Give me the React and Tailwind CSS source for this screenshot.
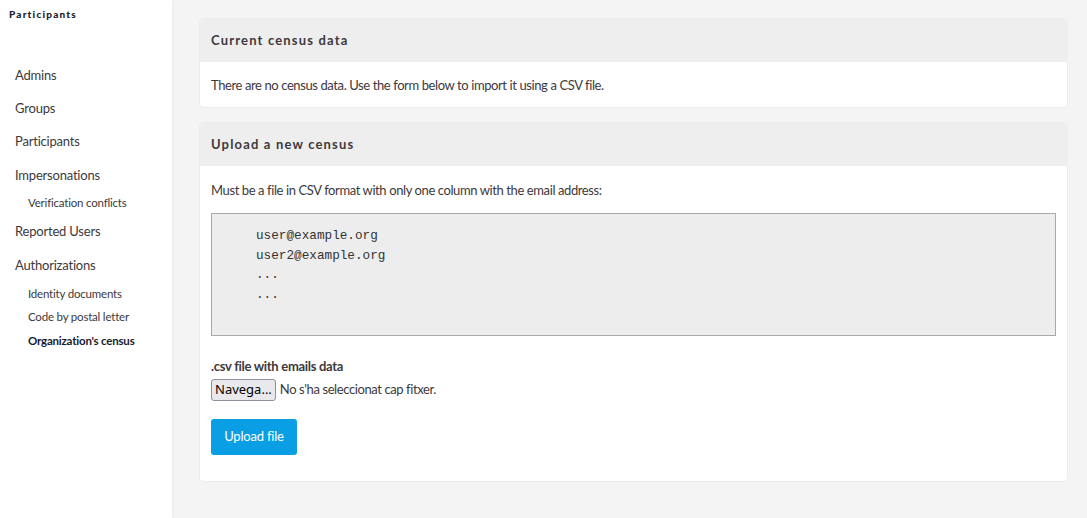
export default function App() {
  const font = { fontFamily: "Lato, 'Noto Sans', sans-serif" };
  return (
    <div className="flex min-h-[518px] w-[1087px] bg-[#f4f4f4] text-[#3d393c]" style={font}>
      <aside className="w-[172px] shrink-0 bg-white shadow-[1px_0_3px_rgba(0,0,0,0.04)]">
        <div className="pl-[9px] pt-[7px] text-[10px] font-black tracking-[0.12em] text-[#1a1a2e]">Participants</div>
        <nav className="mt-[41px] flex flex-col pl-[15px] text-[13px] tracking-[-0.2px]">
          <a className="h-[33px] leading-[24px]">Admins</a>
          <a className="h-[33px] leading-[24px]">Groups</a>
          <a className="h-[34px] leading-[24px]">Participants</a>
          <a className="h-[24px] leading-[24px]">Impersonations</a>
          <a className="h-[32px] pl-[13px] text-[11.5px] leading-[32px]">Verification conflicts</a>
          <a className="h-[34px] leading-[24px]">Reported Users</a>
          <a className="h-[31px] leading-[24px]">Authorizations</a>
          <a className="h-[23px] pl-[13px] text-[11.5px] leading-[20px]">Identity documents</a>
          <a className="h-[24px] pl-[13px] text-[11.5px] leading-[20px]">Code by postal letter</a>
          <a className="h-[24px] pl-[13px] text-[11.5px] font-bold leading-[20px] text-[#1a1a2e]">Organization's census</a>
        </nav>
      </aside>
      <main className="flex flex-1 flex-col gap-[14px] pl-[27px] pr-[19px] pt-[18px] pb-[37px]">
        <section className="overflow-hidden rounded-[4px] border border-[#ececec] bg-white">
          <h2 className="flex h-[43px] items-center bg-[#eeeeee] px-[11px] text-[13px] font-bold tracking-[0.09em] text-[#3d393c]">Current census data</h2>
          <p className="px-[11px] pt-[15px] pb-[14px] text-[13px] leading-[16px] tracking-[-0.4px]">There are no census data. Use the form below to import it using a CSV file.</p>
        </section>
        <section className="overflow-hidden rounded-[4px] border border-[#ececec] bg-white">
          <h2 className="flex h-[43px] items-center bg-[#eeeeee] px-[11px] text-[13px] font-bold tracking-[0.09em] text-[#3d393c]">Upload a new census</h2>
          <div className="px-[11px] pt-[15px] pb-[26px]">
            <p className="text-[13px] leading-[18px] tracking-[-0.4px]">Must be a file in CSV format with only one column with the email address:</p>
            <pre className="mt-[14px] h-[123px] border border-[#aaaaaa] bg-[#ededed] pl-[44px] pt-[12px] text-[12.7px] leading-[19.6px] text-[#333]" style={{ fontFamily: "'Liberation Mono', monospace" }}>{`user@example.org
user2@example.org
...
...`}</pre>
            <label className="mt-[22px] block text-[13px] font-bold leading-[16px] tracking-[-0.3px]">.csv file with emails data</label>
            <div className="mt-[5px] flex items-center gap-[4px] text-[13px] tracking-[-0.4px]">
              <span className="flex h-[22px] items-center rounded-[3px] border border-[#8f8f9d] bg-[#e9e9ed] px-[3px] text-[13px] tracking-normal text-black" style={{ fontFamily: "'Noto Sans', sans-serif" }}>Navega...</span>
              <span>No s'ha seleccionat cap fitxer.</span>
            </div>
            <button className="mt-[18px] flex h-[36px] w-[86px] items-center justify-center rounded-[3px] bg-[#0a9fe4] text-[13px] tracking-[-0.2px] text-white">Upload file</button>
          </div>
        </section>
      </main>
    </div>
  );
}
